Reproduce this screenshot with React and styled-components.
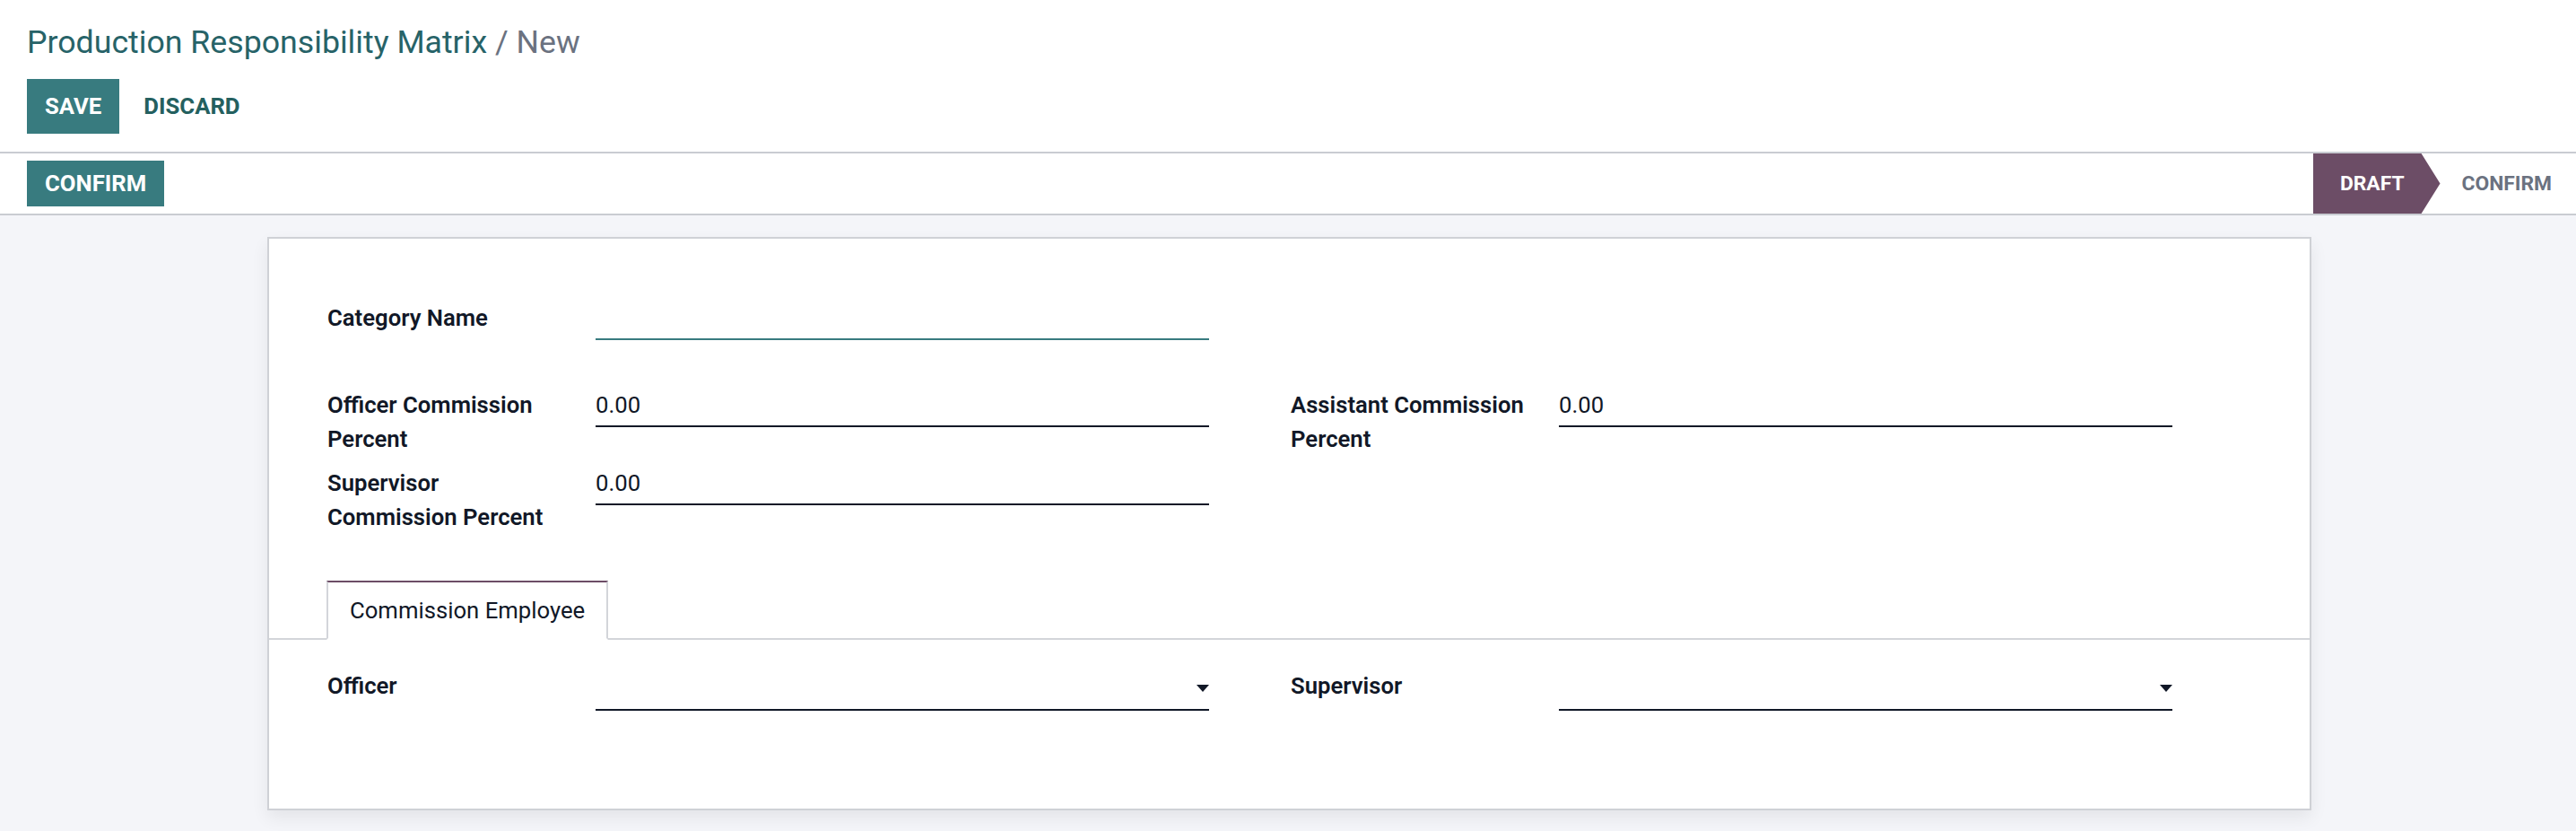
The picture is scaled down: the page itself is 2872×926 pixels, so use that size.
import React from 'react';
import styled, { createGlobalStyle } from 'styled-components';

const GlobalStyle = createGlobalStyle`
    html, body {
        margin: 0;
        padding: 0;
    }
    body {
        background: #f4f5f9;
        font-family: Roboto, "Noto Sans", "Liberation Sans", sans-serif;
        color: #111827;
    }
`;

const Page = styled.div`
    min-height: 926px;
    background: #f4f5f9;
`;

const ControlPanel = styled.div`
    background: #fff;
    padding: 22px 30px 20px;
    border-bottom: 2px solid #c9ccd2;
`;

const Breadcrumb = styled.div`
    font-size: 35.7px;
    line-height: 50px;
    color: #276368;
    white-space: nowrap;
`;

const Current = styled.span`
    color: #6b7280;
`;

const Buttons = styled.div`
    display: flex;
    margin-top: 16px;
`;

const Button = styled.button`
    font-family: inherit;
    font-size: 25.7px;
    font-weight: 700;
    line-height: 39px;
    text-transform: uppercase;
    border: none;
    padding: ${(props) => (props.small ? '6px 20px' : '11px 20px')};
    margin-left: ${(props) => (props.secondary ? '7px' : '0')};
    background: ${(props) => (props.secondary ? 'transparent' : '#387b7f')};
    color: ${(props) => (props.secondary ? '#24605f' : '#fff')};
    cursor: pointer;
`;

const StatusBar = styled.div`
    display: flex;
    justify-content: space-between;
    align-items: center;
    height: 67px;
    padding-left: 30px;
    background: #fff;
    border-bottom: 2px solid #c9ccd2;
`;

const Steps = styled.div`
    display: flex;
    align-self: stretch;
`;

const Step = styled.div`
    display: flex;
    align-items: center;
    font-size: 22.8px;
    font-weight: 700;
    text-transform: uppercase;
    padding: ${(props) => (props.active ? '0 40px 0 30px' : '0 27px 0 24px')};
    background: ${(props) => (props.active ? '#6c4d66' : 'transparent')};
    color: ${(props) => (props.active ? '#fff' : '#6b7280')};
    clip-path: ${(props) =>
        props.active
            ? 'polygon(0 0, calc(100% - 21px) 0, 100% 50%, calc(100% - 21px) 100%, 0 100%)'
            : 'none'};
`;

const Content = styled.div`
    padding: 24px 0 30px;
`;

const Sheet = styled.div`
    box-sizing: border-box;
    width: 2279px;
    margin: 0 0 0 298px;
    background: #fff;
    border: 2px solid #cfd1d6;
    box-shadow: 0 8px 18px rgba(0, 0, 0, 0.07);
    padding: 69px 0 109px;
`;

const Section = styled.div`
    padding: ${(props) => props.pad || '0 65px'};
    margin-top: ${(props) => props.top || 0}px;
`;

const Group = styled.div`
    display: grid;
    grid-template-columns: 983px 983px;
    column-gap: 91px;
    align-items: start;
`;

const Column = styled.div`
    display: flex;
    flex-direction: column;
    gap: 11px;
`;

const Field = styled.div`
    display: grid;
    grid-template-columns: 299px 1fr;
    align-items: start;
`;

const Label = styled.label`
    font-size: 25.7px;
    line-height: 38px;
    font-weight: 600;
    color: #111827;
    white-space: nowrap;
`;

const Input = styled.div`
    font-size: 25.7px;
    line-height: 38px;
    min-height: 38px;
    padding-bottom: 4px;
    border-bottom: 2px solid ${(props) => (props.focused ? '#387b7f' : '#111827')};
    color: #111827;
`;

const Many2One = styled.div`
    display: flex;
    justify-content: flex-end;
    align-items: center;
    height: 38px;
    padding-bottom: 7px;
    border-bottom: 2px solid #111827;
`;

const Caret = styled.span`
    width: 0;
    height: 0;
    margin-top: 6px;
    border-left: 7.5px solid transparent;
    border-right: 7.5px solid transparent;
    border-top: 8px solid #111827;
`;

const Notebook = styled.div`
    margin-top: 52px;
`;

const TabNav = styled.div`
    display: flex;
    padding-left: 64px;
    border-bottom: 2px solid #d3d5da;
`;

const Tab = styled.div`
    font-size: 25.7px;
    line-height: 38px;
    padding: 12px 24px;
    margin-bottom: -2px;
    background: #fff;
    border: 2px solid #d3d5da;
    border-top-color: ${(props) => (props.active ? '#6c4d66' : '#d3d5da')};
    border-bottom-color: ${(props) => (props.active ? '#fff' : '#d3d5da')};
    color: #111827;
`;

const FormField = ({ label, value, focused }) => (
    <Field>
        <Label>{label}</Label>
        <Input focused={focused}>{value}</Input>
    </Field>
);

const SelectField = ({ label }) => (
    <Field>
        <Label>{label}</Label>
        <Many2One>
            <Caret />
        </Many2One>
    </Field>
);

const App = () => {
    return (
        <Page>
            <GlobalStyle />
            <ControlPanel>
                <Breadcrumb>
                    Production Responsibility Matrix <Current>/ New</Current>
                </Breadcrumb>
                <Buttons>
                    <Button>Save</Button>
                    <Button secondary>Discard</Button>
                </Buttons>
            </ControlPanel>
            <StatusBar>
                <Button small>Confirm</Button>
                <Steps>
                    <Step active>Draft</Step>
                    <Step>Confirm</Step>
                </Steps>
            </StatusBar>
            <Content>
                <Sheet>
                    <Section>
                        <Group>
                            <Column>
                                <FormField label="Category Name" focused />
                            </Column>
                        </Group>
                    </Section>
                    <Section top={53}>
                        <Group>
                            <Column>
                                <FormField
                                    label={<>Officer Commission<br />Percent</>}
                                    value="0.00"
                                />
                                <FormField
                                    label={<>Supervisor<br />Commission Percent</>}
                                    value="0.00"
                                />
                            </Column>
                            <Column>
                                <FormField
                                    label={<>Assistant Commission<br />Percent</>}
                                    value="0.00"
                                />
                            </Column>
                        </Group>
                    </Section>
                    <Notebook>
                        <TabNav>
                            <Tab active>Commission Employee</Tab>
                        </TabNav>
                        <Section pad="32px 65px 0">
                            <Group>
                                <Column>
                                    <SelectField label="Officer" />
                                </Column>
                                <Column>
                                    <SelectField label="Supervisor" />
                                </Column>
                            </Group>
                        </Section>
                    </Notebook>
                </Sheet>
            </Content>
        </Page>
    );
};

export default App;
